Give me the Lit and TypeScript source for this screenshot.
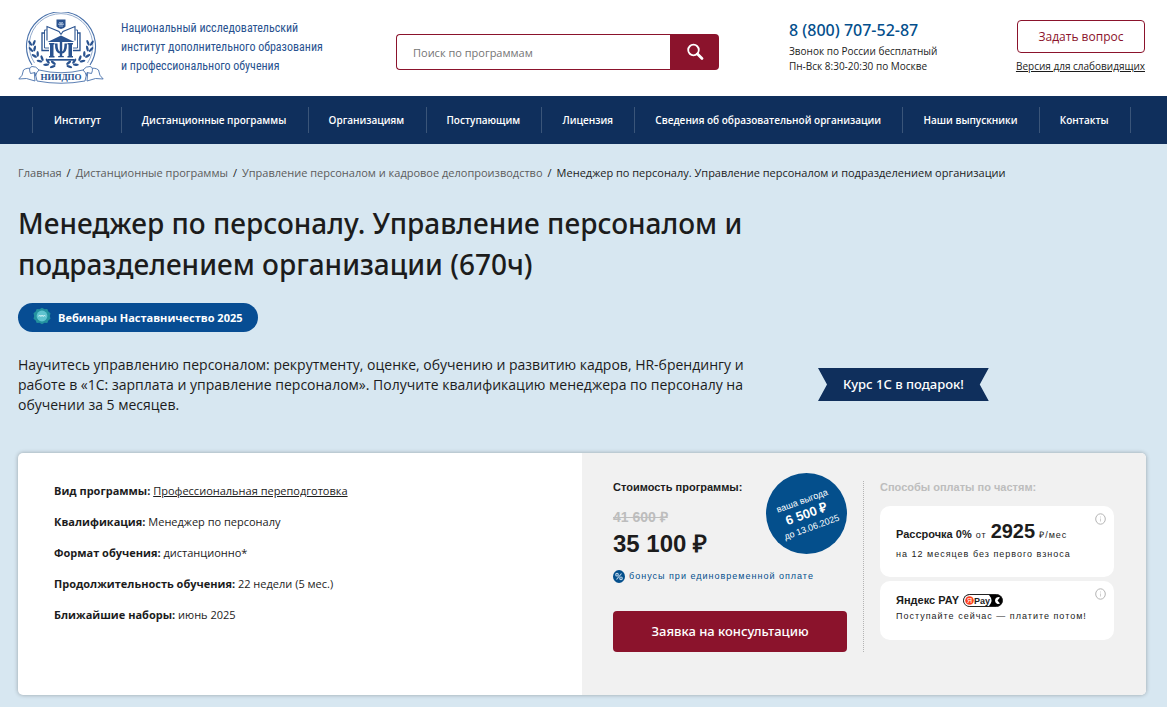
import { LitElement, html, css, svg } from "lit";
import { customElement } from "lit/decorators.js";

const NAV = [
  "Институт",
  "Дистанционные программы",
  "Организациям",
  "Поступающим",
  "Лицензия",
  "Сведения об образовательной организации",
  "Наши выпускники",
  "Контакты",
];

const CRUMBS = ["Главная", "Дистанционные программы", "Управление персоналом и кадровое делопроизводство"];

const FACTS = [
  { name: "Квалификация:", value: "Менеджер по персоналу" },
  { name: "Формат обучения:", value: "дистанционно*" },
  { name: "Продолжительность обучения:", value: "22 недели (5 мес.)" },
  { name: "Ближайшие наборы:", value: "июнь 2025" },
];

// Left laurel branch: leaf pairs with their heading, from tip to stem.
const LEAVES = [
  [14, 30, -95],
  [14.5, 36, -105],
  [17.5, 42, -120],
  [22, 47, -140],
  [28, 50.5, -155],
  [34, 52.5, -170],
];

@customElement("site-emblem")
export class SiteEmblem extends LitElement {
  static styles = css`
    :host { display: block; flex: none; }
    .emblem { display: block; width: 86px; height: 72px; }
    .name { font: 700 9px "Liberation Serif", serif; fill: #29528f; }
  `;

  render() {
    const branch = () => LEAVES.map(([x, y, turn]) => svg`<g transform="translate(${x} ${y}) rotate(${turn})">
      <ellipse cx="0" cy="-2.2" rx="3" ry="1.2" transform="rotate(-28)"></ellipse>
      <ellipse cx="0" cy="2.2" rx="3" ry="1.2" transform="rotate(28)"></ellipse>
    </g>`);
    return html`<svg class="emblem" viewBox="0 0 86 72" role="img" aria-label="НИИДПО">
      <g fill="none" stroke="#4a72ab">
        <path d="M14 53A34.500 34.500 0 1 1 72 53" stroke-width="1.100"></path>
        <path d="M16.500 51A31.800 31.800 0 1 1 69.500 51" stroke-width="0.600"></path>
      </g>
      <g fill="#29528f">
        <path d="M38.500 7.500h9v7q-1 1.500-4.500 2.500-3.500-1-4.500-2.500z"></path>
        <path d="M29.500 30L43 23.500 56.500 30z"></path>
        <path d="M31 31h5.500v1.500h-1V44h1v1.500H31V44h1V32.500h-1zM49.500 31H55v1.500h-1V44h1v1.500h-5.500V44h1V32.500h-1z"></path>
        <path d="M30 47h26v1.700H30z"></path>
        <path d="M37 31.500h2.500q.2 7.500 2.300 8V29.500h2.400v10q2.100-.5 2.300-8H49q.3 9-4.800 10V44h1.600v1.200h-5.600V44h1.600v-2.500q-5.100-1-4.800-10z"></path>
      </g>
      <path d="M40.500 12.500L42 10l1 2.500 1-2.500 1.500 2.500zM41 14h4" fill="none" stroke="#b9cbe4" stroke-width="0.8"></path>
      <g fill="none" stroke="#29528f" stroke-width="1.100">
        <path d="M43 22.500L41 19.500 29 14.500V28.500M43 22.500L45 19.500 57 14.500V28.500"></path>
        <path d="M28.500 18H26.500V36H31M57.500 18H59.500V36H55" stroke-width="0.9"></path>
        <path d="M27 21H24V38.500H31M59 21H62V38.500H55" stroke-width="1.300"></path>
      </g>
      <g fill="#29528f">${branch()}</g>
      <g fill="#29528f" transform="translate(86 0) scale(-1 1)">${branch()}</g>
      <g fill="#fff" stroke="#4a72ab" stroke-width="0.9" stroke-linejoin="round">
        <path d="M16 57Q9 55 5.500 58 5 64 .8 67 8 65 17 69zM70 57Q77 55 80.500 58 81 64 85.200 67 78 65 69 69z"></path>
        <path d="M12.500 61.500Q10 55.500 14 54.500 18 54 21 58 43 63.500 65 58 68 54 72 54.500 76 55.500 73.500 61.500L69 60.500 67 69Q43 73.500 19 69L17 60.500z"></path>
        <path d="M21 58Q18.500 60 17.500 64M65 58Q67.500 60 68.500 64" fill="none"></path>
      </g>
      <text class="name" x="43" y="68" text-anchor="middle">НИИДПО</text>
    </svg>`;
  }
}

@customElement("info-mark")
export class InfoMark extends LitElement {
  static styles = css`
    :host { display: block; }
    .mark { display: block; border: 0; padding: 0; background: none; cursor: pointer; }
    .mark svg { display: block; width: 11px; height: 12px; }
  `;

  render() {
    return html`<button class="mark" type="button" aria-label="Подробнее">
      <svg viewBox="0 0 11 12" fill="none" stroke="#b4b4b4">
        <ellipse cx="5.500" cy="6" rx="4.800" ry="5.200"></ellipse>
        <path d="M5.500 5.500V8.500M5.500 3.500V4.500" stroke="#cfcfcf"></path>
      </svg>
    </button>`;
  }
}

@customElement("app-root")
export class AppRoot extends LitElement {
  static styles = css`
    :host {
      display: block;
      min-height: 100vh;
      background: #d7e7f1;
      color: #1c1c1c;
      font-family: "Open Sans", "Noto Sans", sans-serif;
      font-size: 11px;
    }
    * { box-sizing: border-box; }
    a { color: inherit; }
    button, input { font-family: inherit; }

    .header {
      display: grid;
      grid-template-columns: 378fr 393fr 224fr 133px;
      align-items: start;
      min-height: 96px;
      padding: 0 21px 0 18px;
      background: #fff;
    }
    .brand { display: flex; gap: 17px; padding-top: 12px; color: #29528f; text-decoration: none; }
    .brand-text {
      font-family: "Liberation Sans Narrow", "Roboto Condensed", "Open Sans", sans-serif;
      font-size: 12px;
      line-height: 19px;
      padding-top: 7px;
      white-space: nowrap;
    }
    .search { display: flex; margin: 34px 70px 0 0; height: 36px; }
    .search-input {
      flex: 1;
      min-width: 0;
      border: 1px solid #8b132c;
      border-right: 0;
      border-radius: 4px 0 0 4px;
      padding: 0 16px;
      font-size: 11px;
      color: #1c1c1c;
      background: #fff;
    }
    .search-input::placeholder { color: #757575; opacity: 1; }
    .search-button {
      display: grid;
      place-items: center;
      width: 49px;
      padding: 0;
      border: 0;
      border-radius: 0 4px 4px 0;
      background: #8b132c;
    }
    .search-button svg { width: 18px; height: 18px; }
    .phone { padding-top: 20px; line-height: 15px; font-size: 10px; white-space: nowrap; }
    .phone-number {
      display: block;
      margin-bottom: 4px;
      font-family: "Noto Sans", sans-serif;
      font-size: 16px;
      line-height: 20px;
      font-weight: 500;
      color: #044f8c;
      text-decoration: none;
    }
    .actions { display: flex; flex-direction: column; align-items: flex-end; padding: 20px 1px 0 0; }
    .ask {
      height: 33px;
      width: 128px;
      border: 1px solid #8b132c;
      border-radius: 4px;
      background: #fff;
      color: #8b132c;
      font-size: 12px;
    }
    .sight { margin-top: 6px; font-size: 10px; line-height: 15px; white-space: nowrap; }

    .nav { background: #0f2f5c; color: #fff; padding: 11px 36px 11px 32px; }
    .nav-list { display: flex; margin: 0; padding: 0; list-style: none; }
    .nav-item {
      flex: 1 1 auto;
      border-right: 1px solid #3a5579;
      padding: 0 20px;
      line-height: 26px;
      font-size: 10px;
      font-weight: 600;
      white-space: nowrap;
    }
    .nav-item:first-child { flex-grow: 0; border-left: 1px solid #3a5579; padding-left: 21px; }
    .nav-item a { text-decoration: none; }

    .main { padding: 20px 21px 12px 18px; }
    .crumbs { display: flex; flex-wrap: wrap; margin: 0; padding: 0; list-style: none; line-height: 18px; font-size: 11px; }
    .crumb a { color: #5c5c5c; text-decoration: none; }
    .crumb + .crumb::before { content: "/"; padding: 0 5px; }
    .title {
      max-width: 752px;
      margin: 21px 0 18px;
      font-family: "Noto Sans", sans-serif;
      font-size: 28px;
      line-height: 41px;
      font-weight: 500;
    }
    .tag {
      display: inline-flex;
      align-items: center;
      gap: 7px;
      height: 29px;
      padding: 0 15px;
      border-radius: 15px;
      background: #074d93;
      color: #fff;
      font-size: 11px;
      font-weight: 700;
      text-decoration: none;
    }
    .tag svg { width: 18px; height: 18px; margin-bottom: 4px; }
    .lead-row { display: grid; grid-template-columns: 752fr 376fr; align-items: start; margin-top: 18px; }
    .lead { margin: 5px 0 0; font-size: 14px; line-height: 20px; max-width: 742px; }
    .gift {
      justify-self: start;
      margin: 18px 0 0 48px;
      padding: 0 25px;
      line-height: 33px;
      background: #0f2f5c;
      color: #fff;
      font-family: "Noto Sans", sans-serif;
      font-size: 13px;
      font-weight: 500;
      white-space: nowrap;
      clip-path: polygon(0 0, 100% 0, calc(100% - 9px) 50%, 100% 100%, 0 100%, 9px 50%);
    }

    .card {
      display: grid;
      grid-template-columns: 1fr 1fr;
      min-height: 242px;
      margin-top: 38px;
      border-radius: 5px;
      box-shadow: 0 0 4px rgba(0, 0, 0, 0.3);
      overflow: hidden;
      background: #fff;
    }
    .facts { display: flex; flex-direction: column; gap: 16px; padding: 30px 36px; line-height: 15px; }
    .fact { margin: 0; }
    .pay {
      display: grid;
      grid-template-columns: 251fr 250fr;
      align-items: start;
      padding: 28px 32px 42px 31px;
      background: #f1f1f1;
      font-family: "Liberation Sans", Arial, sans-serif;
    }
    .price { position: relative; padding-right: 16px; border-right: 1px dotted #b4b4b4; }
    .label { margin: 0; font-size: 11px; line-height: 13px; font-weight: 700; }
    .muted { color: #bdbdbd; }
    .old { margin: 14px 0 0; font-size: 14px; line-height: 18px; font-weight: 700; color: #bdbdbd; }
    .now { margin: 4px 0 0; font-size: 24px; line-height: 27px; font-weight: 700; }
    .bonus {
      display: flex;
      align-items: center;
      gap: 4px;
      margin: 12px 0 0;
      font-size: 9px;
      line-height: 14px;
      letter-spacing: 1px;
      color: #044f8c;
      white-space: nowrap;
    }
    .bonus svg { width: 12px; height: 13px; flex: none; }
    .order {
      display: block;
      width: 100%;
      height: 41px;
      margin-top: 28px;
      padding-bottom: 3px;
      border: 0;
      border-radius: 4px;
      background: #8b132c;
      color: #fff;
      font-family: "Noto Sans", sans-serif;
      font-size: 13px;
      font-weight: 500;
    }
    .badge {
      position: absolute;
      top: -8px;
      right: 16px;
      width: 81px;
      height: 81px;
      border-radius: 50%;
      background: #044f8c;
      color: #fff;
      display: grid;
      place-content: center;
      text-align: center;
      font-size: 9px;
      line-height: 14px;
    }
    .badge-text { transform: rotate(-20deg); white-space: nowrap; }
    .badge-text strong { display: block; font-size: 13px; }
    .parts { padding-left: 16px; }
    .option {
      position: relative;
      margin-top: 12px;
      padding: 15px 16px;
      border-radius: 10px;
      background: #fff;
      font-size: 9px;
      line-height: 12px;
      letter-spacing: 1px;
    }
    .option + .option { margin-top: 4px; }
    .option-head { margin: 0; display: flex; align-items: baseline; gap: 4px; line-height: 20px; white-space: nowrap; }
    .option-head strong { font-size: 11px; letter-spacing: 0; }
    .option-head .big { font-size: 20px; }
    .option-note { margin: 3px 0 0; white-space: nowrap; }
    .first { min-height: 71px; }
    .second { min-height: 59px; padding-top: 12px; }
    .second .option-head { align-items: center; line-height: 14px; }
    .info { position: absolute; top: 7px; right: 8px; }
    .yapay { width: 40px; height: 13px; }
    .yapay-word { font: 700 9px "Liberation Sans", sans-serif; letter-spacing: 0; fill: #222; }
    .yapay-mark { font: 400 7px "Liberation Sans", sans-serif; letter-spacing: 0; fill: #fff; }
  `;

  render() {
    return html`
      <header class="header">
        <a class="brand" href="#">
          <site-emblem></site-emblem>
          <span class="brand-text">Национальный исследовательский<br />институт дополнительного образования<br />и профессионального обучения</span>
        </a>
        <form class="search" role="search">
          <input class="search-input" type="search" aria-label="Поиск по программам" placeholder="Поиск по программам" />
          <button class="search-button" type="button" aria-label="Найти">
            <svg viewBox="0 0 18 18" fill="none" stroke="#fff">
              <circle cx="7.500" cy="7" r="5.300" stroke-width="1.800"></circle>
              <path d="M11.500 11L16 15.500" stroke-width="2.800" stroke-linecap="round"></path>
            </svg>
          </button>
        </form>
        <div class="phone">
          <a class="phone-number" href="tel:88007075287">8 (800) 707-52-87</a>
          Звонок по России бесплатный<br />Пн-Вск 8:30-20:30 по Москве
        </div>
        <div class="actions">
          <button class="ask" type="button">Задать вопрос</button>
          <a class="sight" href="#">Версия для слабовидящих</a>
        </div>
      </header>
      <nav class="nav">
        <ul class="nav-list">
          ${NAV.map((item) => html`<li class="nav-item"><a href="#">${item}</a></li>`)}
        </ul>
      </nav>
      <main class="main">
        <ol class="crumbs">
          ${CRUMBS.map((item) => html`<li class="crumb"><a href="#">${item}</a></li>`)}
          <li class="crumb">Менеджер по персоналу. Управление персоналом и подразделением организации</li>
        </ol>
        <h1 class="title">Менеджер по персоналу. Управление персоналом и подразделением организации (670ч)</h1>
        <a class="tag" href="#">
          <svg viewBox="0 0 18 18">
            <path d="M9 .8l2.500 1.400 2.800-.2 1 2.600 2.200 1.700-.7 2.700.7 2.700-2.200 1.700-1 2.600-2.800-.2L9 17.200l-2.500-1.400-2.800.2-1-2.600L.5 11.700 1.200 9 .5 6.300l2.200-1.700 1-2.600 2.800.2z" fill="#23929f"></path>
            <circle cx="9" cy="9" r="5.400" fill="#5fc4d0"></circle>
            <path d="M5.500 9.500l1-1.500.8 1.500.8-1.500.8 1.500.8-1.500.8 1.500L11.500 8l.8 1.500" fill="none" stroke="#d5f3f5" stroke-width="0.8"></path>
          </svg>
          <span>Вебинары Наставничество 2025</span>
        </a>
        <div class="lead-row">
          <p class="lead">Научитесь управлению персоналом: рекрутменту, оценке, обучению и развитию кадров, HR-брендингу и работе в «1С: зарплата и управление персоналом». Получите квалификацию менеджера по персоналу на обучении за 5 месяцев.</p>
          <div class="gift">Курс 1С в подарок!</div>
        </div>
        <section class="card">
          <div class="facts">
            <p class="fact"><strong>Вид программы:</strong> <a href="#">Профессиональная переподготовка</a></p>
            ${FACTS.map((f) => html`<p class="fact"><strong>${f.name}</strong> ${f.value}</p>`)}
          </div>
          <div class="pay">
            <div class="price">
              <p class="label">Стоимость программы:</p>
              <p class="old"><s>41 600 ₽</s></p>
              <p class="now">35 100 ₽</p>
              <p class="bonus">
                <svg viewBox="0 0 12 13">
                  <ellipse cx="6" cy="6.500" rx="6" ry="6.500" fill="#044f8c"></ellipse>
                  <g fill="none" stroke="#b9d3e8" stroke-width="1.100">
                    <circle cx="4" cy="4.700" r="1.300"></circle>
                    <circle cx="8" cy="8.300" r="1.300"></circle>
                    <path d="M8.500 3.500L3.500 9.500"></path>
                  </g>
                </svg>
                <span>бонусы при единовременной оплате</span>
              </p>
              <button class="order" type="button">Заявка на консультацию</button>
              <div class="badge">
                <div class="badge-text">ваша выгода<strong>6 500 ₽</strong>до 13.06.2025</div>
              </div>
            </div>
            <div class="parts">
              <p class="label muted">Способы оплаты по частям:</p>
              <div class="option first">
                <p class="option-head"><strong>Рассрочка 0%</strong><span>от</span><strong class="big">2925</strong><span>₽/мес</span></p>
                <p class="option-note">на 12 месяцев без первого взноса</p>
                <info-mark class="info"></info-mark>
              </div>
              <div class="option second">
                <p class="option-head">
                  <strong>Яндекс PAY</strong>
                  <svg class="yapay" viewBox="0 0 40 13">
                    <rect x="0.500" y="0.500" width="39" height="12" rx="6" fill="#000" stroke="#222"></rect>
                    <path d="M6.500 1H26Q31 6.500 26 12H6.500A5.500 5.500 0 0 1 6.500 1z" fill="#fff"></path>
                    <circle cx="6.500" cy="6.500" r="4.300" fill="#fc3f1d"></circle>
                    <text class="yapay-mark" x="4" y="9">Я</text>
                    <text class="yapay-word" x="11" y="9.500">Pay</text>
                    <path d="M37 3.500A3.400 3.400 0 1 0 37 9.500L34.500 6.500z" fill="#fff"></path>
                  </svg>
                </p>
                <p class="option-note">Поступайте сейчас — платите потом!</p>
                <info-mark class="info"></info-mark>
              </div>
            </div>
          </div>
        </section>
      </main>
    `;
  }
}
